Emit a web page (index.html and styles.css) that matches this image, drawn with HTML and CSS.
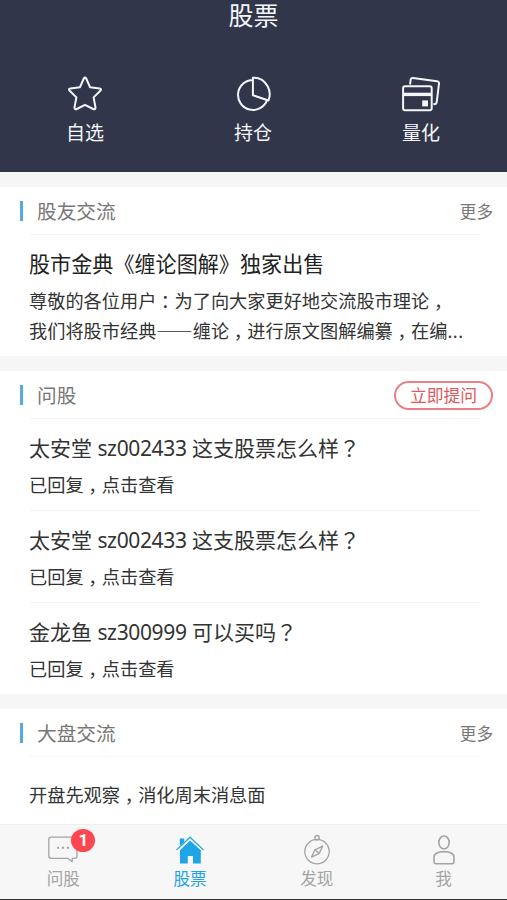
FILE: index.html
```html
<!DOCTYPE html>
<html lang="zh-CN">
<head>
<meta charset="utf-8">
<title>股票</title>
<link rel="stylesheet" href="styles.css">
</head>
<body>
<header class="top">
  <h1>股票</h1>
  <nav class="shortcuts">
    <a class="shortcut">
      <svg width="38" height="38" viewBox="0 0 38 38"><path d="M17.8 3.5Q19 1.5 20.2 3.5L24 12.2L33.6 13.4Q36 14 34.3 15.8L27.6 22.4L29.5 32.5Q29.4 35 27.2 34L19 29.8L10.8 34Q8.6 35 8.5 32.5L10.4 22.4L3.7 15.8Q2 14 4.4 13.4L14 12.2Z"/></svg>
      <span>自选</span>
    </a>
    <a class="shortcut">
      <svg width="38" height="38" viewBox="0 0 38 38"><path d="M18.9 5A15 15 0 1 0 33.1 25.2M18.9 2.7V20.2L34.5 25.5Q37.3 18 33.8 11.5C30.6 5.5 25.3 2.4 18.9 2.7Z"/></svg>
      <span>持仓</span>
    </a>
    <a class="shortcut">
      <svg width="38" height="38" viewBox="0 0 38 38"><rect x="1.1" y="11.2" width="28.6" height="24" rx="2"/><path class="band" d="M1 19.4H30"/><path class="fill" d="M20.2 25.4h5.8v6h-5.8z"/><path d="M8.2 8.7L8.6 5Q9 2.7 11 3L35 6.2Q37.2 6.5 37 8.5L34.7 27.3Q34.2 29.5 32.1 29.1"/></svg>
      <span>量化</span>
    </a>
  </nav>
</header>

<main>
  <section class="card card-forum">
    <div class="head"><h2>股友交流</h2><a class="more">更多</a></div>
    <article class="post">
      <h3>股市金典《缠论图解》独家出售</h3>
      <p>尊敬的各位用户<i class="colon" lang="zh-TW">：</i>为了向大家更好地交流股市理论<i lang="zh-TW">，</i><br>我们将股市经典——缠论<i lang="zh-TW">，</i>进行原文图解编纂<i lang="zh-TW">，</i>在编<b class="more-dots">...</b></p>
    </article>
  </section>

  <section class="card card-ask">
    <div class="head"><h2>问股</h2><a class="ask">立即提问</a></div>
    <article class="question"><h3>太安堂 <b>sz002433</b> 这支股票怎么样<i lang="zh-TW">？</i></h3><p>已回复<i lang="zh-TW">，</i>点击查看</p></article>
    <article class="question"><h3>太安堂 <b>sz002433</b> 这支股票怎么样<i lang="zh-TW">？</i></h3><p>已回复<i lang="zh-TW">，</i>点击查看</p></article>
    <article class="question"><h3>金龙鱼 <b>sz300999</b> 可以买吗<i lang="zh-TW">？</i></h3><p>已回复<i lang="zh-TW">，</i>点击查看</p></article>
  </section>

  <section class="card card-market">
    <div class="head"><h2>大盘交流</h2><a class="more">更多</a></div>
    <p class="brief">开盘先观察<i lang="zh-TW">，</i>消化周末消息面</p>
  </section>
</main>

<nav class="tabs">
  <a class="tab">
    <span class="icon">
      <svg width="32" height="32" viewBox="0 0 32 32"><path d="M4.2 3.2H27.6Q30 3.2 30 5.6V22Q30 24.4 27.6 24.4H25.2V27.8L21 24.4H4.2Q1.8 24.4 1.8 22V5.6Q1.8 3.2 4.2 3.2Z"/><path class="dots" d="M10 13.8h2M15 13.8h2M20 13.8h2"/></svg>
      <span class="badge">1</span>
    </span>
    <span>问股</span>
  </a>
  <a class="tab active">
    <span class="icon"><svg width="32" height="32" viewBox="0 0 32 32"><path class="solid" d="M5.8 4.6H10.2V8L5.8 12ZM16 6.6L26.8 16.3V29.6H19V22H13.8V29.6H6V16.3Z"/><path d="M2.8 15.6L16 3.2L29.2 15.6"/></svg></span>
    <span>股票</span>
  </a>
  <a class="tab">
    <span class="icon"><svg width="32" height="32" viewBox="0 0 32 32"><circle cx="16" cy="17.6" r="12.2"/><circle cx="16" cy="3.8" r="2.3"/><path d="M21.7 12.1L18 19.6L10.5 23.1L14 15.8ZM14 15.8L18 19.6"/></svg></span>
    <span>发现</span>
  </a>
  <a class="tab">
    <span class="icon"><svg class="person" width="32" height="32" viewBox="0 0 32 32"><ellipse cx="16" cy="8.4" rx="5.2" ry="6.4"/><path d="M8 29.8Q6 29.8 6 27.6V23.6Q6 17.6 16 17.6T26 23.6V27.6Q26 29.8 24 29.8Z"/></svg></span>
    <span>我</span>
  </a>
</nav>
</body>
</html>
```

FILE: styles.css
```css
* { box-sizing: border-box; }

body {
  margin: 0;
  height: 900px;
  overflow: hidden;
  display: flex;
  flex-direction: column;
  background: #f6f6f6;
  color: #333;
  font-family: "Noto Sans CJK SC", sans-serif;
}

h1, h2, h3, p { margin: 0; font-weight: 400; white-space: nowrap; }

svg { display: block; fill: none; stroke: currentColor; stroke-linejoin: round; stroke-linecap: round; }

/* Full-width punctuation is centred in its cell, near the baseline */
i { font-family: "Noto Sans CJK TC", sans-serif; font-style: normal; line-height: 0; vertical-align: -6px; }
i.colon { vertical-align: -1px; }
h3 i { vertical-align: 0; }
b { font-family: "Noto Sans", sans-serif; font-weight: 400; letter-spacing: -0.35px; margin: 0 0.7px; }
.more-dots { margin: 0; letter-spacing: 0.5px; }

.top { flex: none; height: 172px; background: #31364a; color: #f4f6fb; }
.top h1 { height: 30px; font-size: 25px; line-height: 28px; text-align: center; }

.shortcuts { display: grid; grid-template-columns: repeat(3, 1fr); padding: 45px 2px 0 1px; }
.shortcut { display: flex; flex-direction: column; align-items: center; font-size: 19px; line-height: 28px; gap: 5px; }
.shortcut svg { stroke-width: 2; }
.shortcut .band { stroke-width: 3.4; stroke-linecap: butt; }
.shortcut .fill { fill: currentColor; stroke: none; }

main { flex: none; height: 652px; padding-top: 15px; display: flex; flex-direction: column; gap: 15px; overflow: hidden; }
.card { flex: none; background: #fff; }
.card-forum { height: 169px; }
.card-ask { height: 323px; }
.card-market { height: 115px; }

.head { position: relative; height: 48px; padding: 0 14px 0 20px; display: flex; align-items: center; justify-content: space-between; }
.head::after { content: ""; position: absolute; left: 30px; right: 27px; bottom: 0; height: 1px; background: #f4f4f4; }
.head h2 { display: flex; align-items: center; gap: 14px; color: #777; font-size: 19.7px; line-height: 28px; }
.head h2::before { content: ""; width: 3px; height: 20px; background: #57a9e2; }
.more { color: #777; font-size: 16.6px; }
.ask { width: 99px; height: 29px; border: 2px solid #ea8085; border-radius: 15px; color: #e0575e; font-size: 16.8px; line-height: 25px; text-align: center; }

.post { padding: 11px 29px 0; }
.post h3 { color: #222; font-size: 21.1px; line-height: 34px; }
.post p { padding-top: 5px; font-size: 18.2px; line-height: 30px; }

.question { height: 92px; margin: 0 27px 0 30px; padding-top: 11px; border-bottom: 1px solid #f4f4f4; }
.question:last-child { border-bottom: 0; }
.question h3 { margin-left: -1px; font-size: 21px; line-height: 34px; }
.question p { margin-left: -1px; padding-top: 5px; font-size: 18.2px; line-height: 28px; }
.brief { padding: 23px 29px 0; font-size: 18.2px; line-height: 28px; }

.tabs { flex: none; height: 76px; display: grid; grid-template-columns: repeat(4, 1fr); background: #f7f7f7; border-top: 1px solid #eee; border-bottom: 1px solid #333; }
.tab { display: flex; flex-direction: column; align-items: center; padding-top: 9px; color: #a4a4a4; font-size: 16.6px; line-height: 24px; }
.tab svg { stroke-width: 1.3; }
.tab svg.person { stroke-width: 1.6; }
.tab .dots { stroke-width: 2; stroke-linecap: butt; }
.active { color: #1ea5e8; }
.active .solid { fill: currentColor; stroke: none; }
.icon { position: relative; }
.badge { position: absolute; left: 24px; top: -5px; width: 24px; height: 23px; border-radius: 50%; background: #fc4650; color: #fff; font: 700 17px/23px Roboto, sans-serif; text-align: center; }
```
